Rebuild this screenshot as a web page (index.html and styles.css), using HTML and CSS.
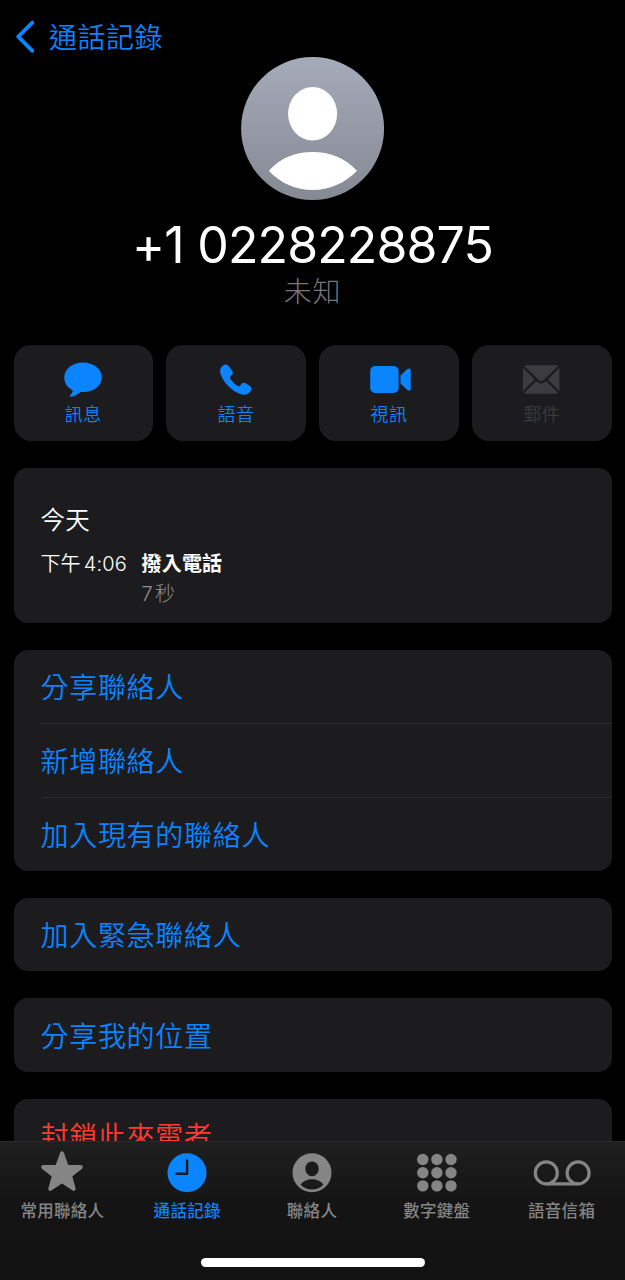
FILE: index.html
```html
<!DOCTYPE html>
<html lang="zh-Hant">
<head>
<meta charset="utf-8">
<title>通話記錄</title>
<link rel="stylesheet" href="styles.css">
</head>
<body>
<main class="content">
  <nav class="nav">
    <svg class="nav-chevron" width="20" height="34" viewBox="0 0 20 34"><path d="M18.4 2.6 4.2 16.6 18.4 30.8"/></svg>
    <span class="nav-title">通話記錄</span>
  </nav>
  <header class="profile">
    <svg class="avatar" width="144" height="144" viewBox="0 0 144 144">
      <defs><linearGradient id="avatar-fill" x1="0" y1="0" x2="0" y2="1"><stop offset="0" stop-color="#a6abba"/><stop offset="1" stop-color="#858993"/></linearGradient></defs>
      <circle cx="71.6" cy="72.5" r="71.5" fill="url(#avatar-fill)"/>
      <ellipse cx="71.6" cy="57.8" rx="24.5" ry="26.8" fill="#fff"/>
      <path d="M27.8 114.8C39.6 101.5 54.6 96 71.6 96S103.6 101.5 116 114.8C103.6 127.5 88.6 134 71.6 134S39.6 127.5 27.8 114.8Z" fill="#fff"/>
    </svg>
    <h1 class="number">+1 0228228875</h1>
    <p class="status">未知</p>
  </header>
  <section class="actions">
    <button class="action">
      <svg width="42" height="36" viewBox="0 0 42 36"><path d="M21 1.5C31.5 1.5 39.8 8 39.8 16.4S31.5 31 21 31L18.6 30.9C15.5 33.2 12.3 35.2 9 35.7 7.6 35.8 7.6 34.8 8.5 33.9 9.8 32.5 10.6 31 10.8 29.3 5.5 26.8 2.3 22 2.3 16.4 2.3 8 10.5 1.5 21 1.5Z"/></svg>
      <span>訊息</span>
    </button>
    <button class="action">
      <svg width="42" height="36" viewBox="0 0 42 36"><path d="M8 4.4C10.2 2.8 12.4 3.3 13.8 5.2L17.2 10C18.2 11.5 18.1 12.7 16.9 14L15.2 15.6C14.7 16.2 14.8 16.8 15.1 17.5 16.9 20.4 20.2 23.6 23 25.1 23.7 25.5 24.3 25.4 24.9 24.8L26.7 22.7C27.8 21.4 29.4 21.3 31.2 22.4L34.9 25C36.9 26.4 37 28.3 35.5 30.3 33.2 33.3 29.9 34.4 25.8 33.2 17 30.6 7.3 20.5 5.3 12.1 4.6 9 5.5 6.1 8 4.4Z"/></svg>
      <span>語音</span>
    </button>
    <button class="action">
      <svg width="42" height="36" viewBox="0 0 42 36"><rect x="2.2" y="5" width="28.4" height="27" rx="5"/><path d="M32.5 14.4 39 8.3C40.9 6.8 42.7 7.3 42.7 9.1V27.9C42.7 29.7 40.9 30.2 39 28.7L32.5 22.6Z"/></svg>
      <span>視訊</span>
    </button>
    <button class="action action-disabled">
      <svg width="42" height="36" viewBox="0 0 42 36"><rect x="2" y="4.2" width="36.4" height="28.6" rx="3"/><path class="mail-seam" d="M2.2 5.5 16.6 19.6Q20.2 23.2 23.8 19.6L38.2 5.5M2.2 31.5 15 18.6M38.2 31.5 25.4 18.6"/></svg>
      <span>郵件</span>
    </button>
  </section>
  <section class="card history">
    <h2 class="history-day">今天</h2>
    <div class="history-row">
      <span class="history-time">下午 4:06</span>
      <div class="history-detail">
        <strong class="history-kind">撥入電話</strong>
        <span class="history-length">7 秒</span>
      </div>
    </div>
  </section>
  <section class="card"><a class="row">分享聯絡人</a><a class="row">新增聯絡人</a><a class="row">加入現有的聯絡人</a></section>
  <section class="card"><a class="row">加入緊急聯絡人</a></section>
  <section class="card"><a class="row">分享我的位置</a></section>
  <section class="card"><a class="row row-danger">封鎖此來電者</a></section>
</main>
<footer class="bottom">
  <nav class="tabs">
    <a class="tab">
      <svg width="60" height="44" viewBox="0 0 60 44"><path class="star" d="M30 3.4 34.7 16.7 48.8 17.1 38 25.6 41.7 38.9 30 31.2 18.3 38.9 22 25.6 11.2 17.1 25.3 16.7Z"/></svg>
      <span>常用聯絡人</span>
    </a>
    <a class="tab tab-active">
      <svg width="60" height="44" viewBox="0 0 60 44"><circle cx="30" cy="22.8" r="19.5"/><path class="hands" d="M30.1 10.5V23.8H19.5"/></svg>
      <span>通話記錄</span>
    </a>
    <a class="tab">
      <svg width="60" height="44" viewBox="0 0 60 44"><circle cx="30" cy="22.8" r="19.5"/><ellipse class="cutout" cx="30" cy="18.8" rx="6.7" ry="7.4"/><path class="cutout" d="M18.5 34.4C21.8 30.8 25.6 29.3 30 29.3S38.2 30.8 41.5 34.4C38.4 37.7 34.6 39.4 30 39.4S21.6 37.7 18.5 34.4Z"/></svg>
      <span>聯絡人</span>
    </a>
    <a class="tab">
      <svg width="60" height="44" viewBox="0 0 60 44"><circle cx="15.8" cy="9.5" r="5.7"/><circle cx="29.9" cy="9.5" r="5.7"/><circle cx="44" cy="9.5" r="5.7"/><circle cx="15.8" cy="22.7" r="5.7"/><circle cx="29.9" cy="22.7" r="5.7"/><circle cx="44" cy="22.7" r="5.7"/><circle cx="15.8" cy="35.9" r="5.7"/><circle cx="29.9" cy="35.9" r="5.7"/><circle cx="44" cy="35.9" r="5.7"/></svg>
      <span>數字鍵盤</span>
    </a>
    <a class="tab">
      <svg width="60" height="44" viewBox="0 0 60 44"><g class="voicemail"><circle cx="14.3" cy="22.9" r="11"/><circle cx="46.1" cy="22.9" r="11"/><path d="M14.3 33.9H46.1"/></g></svg>
      <span>語音信箱</span>
    </a>
  </nav>
  <div class="home-indicator"></div>
</footer>
</body>
</html>
```
FILE: styles.css
```css
* { box-sizing: border-box; }

body {
  margin: 0;
  height: 1280px;
  overflow: hidden;
  display: flex;
  flex-direction: column;
  background: #000;
  color: #fff;
  font-family: Inter, "Noto Sans CJK TC", sans-serif;
}

h1, h2, p { margin: 0; font-weight: 400; }

.content {
  height: 1141px;
  flex: none;
  overflow: hidden;
  padding: 0 13.5px;
}

.nav {
  display: flex;
  align-items: center;
  height: 56px;
  padding-top: 18px;
  gap: 15.5px;
  color: #0a84ff;
}

.nav-chevron {
  fill: none;
  stroke: #0a84ff;
  stroke-width: 3.8;
  stroke-linecap: round;
  stroke-linejoin: round;
}

.nav-title {
  padding-top: 2px;
  font-size: 28px;
  line-height: 38px;
  letter-spacing: .5px;
  font-weight: 350;
}

.profile {
  display: flex;
  flex-direction: column;
  align-items: center;
}

.avatar { display: block; }

.number {
  margin-top: 15px;
  font-size: 50px;
  line-height: 60px;
  letter-spacing: -.9px;
  word-spacing: .5px;
  white-space: nowrap;
}

.status {
  font-size: 28px;
  line-height: 34px;
  letter-spacing: .7px;
  font-weight: 300;
  color: #77777b;
}

.actions {
  display: grid;
  grid-template-columns: repeat(4, 1fr);
  gap: 13.3px;
  margin-top: 35.5px;
}

.action {
  display: flex;
  flex-direction: column;
  align-items: center;
  height: 96.5px;
  padding: 16.5px 0 0;
  border: 0;
  border-radius: 17px;
  background: #1c1c1e;
  color: #0a84ff;
  font-family: inherit;
  font-size: 18px;
  font-weight: 350;
  line-height: 24px;
  letter-spacing: .6px;
}

.action svg { fill: currentColor; overflow: visible; flex: none; margin-bottom: 6px; }
.action-disabled { color: #3b3b40; }
.mail-seam { fill: none; stroke: #1c1c1e; stroke-width: 2.4; }

.card {
  margin-top: 27px;
  border-radius: 14px;
  background: #1c1c1e;
}

.history { height: 154.5px; padding: 34px 27px 0; }

.history-day {
  font-size: 24.5px;
  line-height: 36px;
  letter-spacing: .3px;
  font-weight: 350;
}

.history-row {
  display: flex;
  margin-top: 11px;
  font-size: 20px;
  line-height: 30px;
}

.history-time { width: 101px; white-space: nowrap; font-weight: 350; word-spacing: -2.6px; letter-spacing: .1px; }
.history-detail { display: flex; flex-direction: column; }
.history-kind { font-weight: 700; letter-spacing: .2px; }
.history-length { color: #8d8d93; font-weight: 300; word-spacing: -3.2px; }

.row {
  display: flex;
  align-items: center;
  height: 73.7px;
  padding-bottom: 1px;
  margin-left: 27px;
  color: #0a84ff;
  font-size: 28px;
  font-weight: 350;
  letter-spacing: .7px;
}

.row + .row { border-top: 1px solid #2b2b2e; }
.row-danger { padding-bottom: 2px; color: #ff3b30; }

.bottom {
  display: flex;
  flex-direction: column;
  align-items: center;
  height: 139px;
  flex: none;
  border-top: 1px solid #2c2b2c;
  background: linear-gradient(#201f20, #141414 45%, #121212);
}

.tabs {
  display: grid;
  grid-template-columns: repeat(5, 1fr);
  width: 100%;
  padding: 8px 1px 0 0;
}

.tab {
  display: flex;
  flex-direction: column;
  align-items: center;
  color: #858585;
  font-size: 16.5px;
  font-weight: 500;
  line-height: 24px;
  letter-spacing: .3px;
}

.tab svg { fill: currentColor; margin-bottom: 5px; }
.tab-active { color: #0a84ff; }
.star { stroke: currentColor; stroke-width: 4; stroke-linejoin: round; }
.hands { fill: none; stroke: #1b1b1c; stroke-width: 2.4; stroke-linecap: round; stroke-linejoin: round; }
.cutout { fill: #1a1a1b; }
.tab svg .voicemail { fill: none; stroke: currentColor; stroke-width: 3.2; }

.home-indicator {
  width: 224px;
  height: 9px;
  margin-top: 34.5px;
  border-radius: 5px;
  background: #fff;
}
```
